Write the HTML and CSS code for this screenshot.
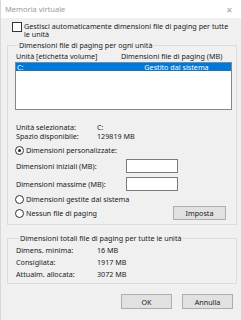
FILE: index.html
```html
<!DOCTYPE html>
<html lang="it">
<head>
  <meta charset="UTF-8">
  <title>Memoria virtuale</title>
  <link rel="stylesheet" href="styles.css">
</head>
<body>
  <div class="window">
    <div class="titlebar">
      <span class="title">Memoria virtuale</span>
      <span class="close">✕</span>
    </div>

    <div class="content">
      <label class="check-row">
        <span class="checkbox"></span>
        <span class="check-text">Gestisci automaticamente dimensioni file di paging per tutte le unità</span>
      </label>

      <fieldset class="group group-drives">
        <legend>Dimensioni file di paging per ogni unità</legend>
        <div class="list-head">
          <span class="col-a">Unità [etichetta volume]</span>
          <span class="col-b">Dimensioni file di paging (MB)</span>
        </div>
        <div class="listbox">
          <div class="list-row selected">
            <span class="col-a">C:</span>
            <span class="col-b center">Gestito dal sistema</span>
          </div>
        </div>

        <div class="info">
          <div class="info-row"><span class="info-label">Unità selezionata:</span><span>C:</span></div>
          <div class="info-row"><span class="info-label">Spazio disponibile:</span><span>129819 MB</span></div>
        </div>

        <div class="radio-row first">
          <span class="radio checked"></span>
          <span>Dimensioni personalizzate:</span>
        </div>
        <div class="size-row">
          <span class="size-label">Dimensioni iniziali (MB):</span>
          <span class="textbox"></span>
        </div>
        <div class="size-row">
          <span class="size-label">Dimensioni massime (MB):</span>
          <span class="textbox"></span>
        </div>

        <div class="bottom-row">
          <div class="radios">
            <div class="radio-row">
              <span class="radio"></span>
              <span>Dimensioni gestite dal sistema</span>
            </div>
            <div class="radio-row">
              <span class="radio"></span>
              <span>Nessun file di paging</span>
            </div>
          </div>
          <button class="btn btn-set">Imposta</button>
        </div>
      </fieldset>

      <fieldset class="group group-total">
        <legend>Dimensioni totali file di paging per tutte le unità</legend>
        <div class="total-row"><span class="info-label">Dimens. minima:</span><span>16 MB</span></div>
        <div class="total-row"><span class="info-label">Consigliata:</span><span>1917 MB</span></div>
        <div class="total-row"><span class="info-label">Attualm. allocata:</span><span>3072 MB</span></div>
      </fieldset>

      <div class="actions">
        <button class="btn">OK</button>
        <button class="btn">Annulla</button>
      </div>
    </div>
  </div>
</body>
</html>
```

FILE: styles.css
```css
body {
  margin: 0;
  font-family: "Noto Sans", "Open Sans", sans-serif;
  font-size: 7.2px;
  color: #1a1a1a;
}
.window {
  width: 242px;
  height: 320px;
  box-sizing: border-box;
  background-color: #f0f0f0;
  border-left: 1px solid #d8d8d8;
  border-right: 1px solid #d8d8d8;
  overflow: hidden;
}
.titlebar {
  height: 18px;
  background-color: #fff;
  display: flex;
  align-items: center;
  justify-content: space-between;
  padding: 0 8px 0 4px;
}
.title {
  color: #9a9a9a;
  font-size: 7.5px;
}
.close {
  color: #a0a0a0;
  font-size: 8px;
}
.content {
  padding: 4px 4px 0 6px;
}
.check-row {
  display: flex;
  align-items: flex-start;
  gap: 2px;
  line-height: 8px;
  padding-left: 5px;
}
.check-text {
  width: 206px;
}
.checkbox {
  flex: none;
  width: 8px;
  height: 8px;
  border: 1px solid #333;
  background-color: #fff;
}
.group {
  margin: 0;
  padding: 0 4px 0 7px;
  border: 1px solid #dcdcdc;
}
.group legend {
  padding: 0 1px;
  margin-left: 3px;
  line-height: 8px;
}
.group-drives {
  margin-top: 3px;
  height: 184px;
  box-sizing: border-box;
}
.list-head {
  display: flex;
  line-height: 9px;
  margin-top: 3px;
}
.col-a {
  width: 105px;
  padding-left: 1px;
}
.col-b {
  flex: 1;
}
.center {
  text-align: center;
}
.listbox {
  height: 46px;
  border: 1px solid #828790;
  background-color: #fff;
  margin-top: 1px;
}
.list-row {
  display: flex;
  line-height: 8px;
}
.list-row.selected {
  background-color: #0078d7;
  color: #fff;
}
.info {
  margin-top: 13px;
  padding-left: 1px;
}
.info-row {
  display: flex;
  line-height: 9px;
}
.info-label {
  width: 81px;
}
.radio-row {
  display: flex;
  align-items: center;
  gap: 2px;
  line-height: 9px;
}
.radio-row.first {
  margin-top: 5px;
}
.radio {
  flex: none;
  width: 7px;
  height: 7px;
  border: 1px solid #333;
  border-radius: 50%;
  background-color: #fff;
  box-sizing: content-box;
  position: relative;
}
.radio.checked::after {
  content: "";
  position: absolute;
  left: 2px;
  top: 2px;
  width: 3px;
  height: 3px;
  border-radius: 50%;
  background-color: #222;
}
.size-row {
  display: flex;
  align-items: center;
  padding-left: 1px;
  margin-top: 4px;
}
.size-label {
  width: 110px;
}
.textbox {
  width: 52px;
  height: 14px;
  border: 1px solid #7a7a7a;
  background-color: #fff;
  box-sizing: border-box;
}
.size-row + .size-row {
  margin-top: 4px;
}
.bottom-row {
  display: flex;
  align-items: flex-start;
  justify-content: space-between;
  margin-top: 4px;
}
.radios .radio-row + .radio-row {
  margin-top: 5px;
}
.btn {
  font-family: inherit;
  font-size: 7.2px;
  color: #1a1a1a;
  background-color: #e1e1e1;
  border: 1px solid #adadad;
  padding: 0;
  height: 14px;
}
.btn-set {
  width: 53px;
  margin-top: 11px;
  margin-right: 6px;
}
.group-total {
  margin-top: 9px;
  height: 50px;
  box-sizing: border-box;
  padding-left: 8px;
}
.total-row {
  display: flex;
  line-height: 12px;
}
.total-row:first-of-type {
  margin-top: 2px;
}
.actions {
  display: flex;
  justify-content: flex-end;
  gap: 10px;
  margin-top: 10px;
  padding-right: 4px;
}
.actions .btn {
  width: 51px;
  height: 15px;
}
```
